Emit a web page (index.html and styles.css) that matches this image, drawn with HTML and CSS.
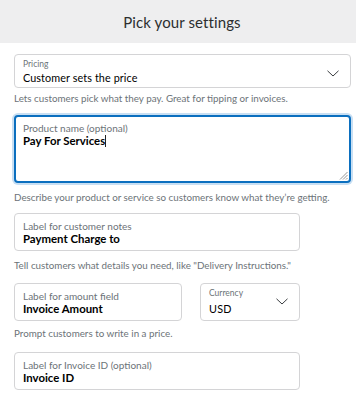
FILE: index.html
```html
<!DOCTYPE html>
<html>
<head>
<meta charset="utf-8">
<link rel="stylesheet" href="styles.css">
</head>
<body>
<header class="top"><h1 class="title">Pick your settings</h1></header>
<main class="form">
  <div class="box select pricing">
    <div class="box-text">
      <span class="lbl small">Pricing</span>
      <span class="val">Customer sets the price</span>
    </div>
    <svg class="chev" width="12" height="7" viewBox="0 0 12 7"><path d="M0.5 0.8 L6 6 L11.5 0.8" fill="none" stroke="#3a3d40" stroke-width="1"/></svg>
  </div>
  <p class="help g1">Lets customers pick what they pay. Great for tipping or invoices.</p>

  <div class="box area">
    <div class="box-text">
      <span class="lbl">Product name (optional)</span>
      <span class="val">Pay For Services<span class="caret"></span></span>
    </div>
    <svg class="grip" width="9" height="9" viewBox="0 0 9 9"><path d="M8.5 1 L1 8.5 M8.5 4 L4 8.5 M8.5 7 L7 8.5" stroke="#888" stroke-width="0.9"/></svg>
  </div>
  <p class="help g2">Describe your product or service so customers know what they’re getting.</p>

  <div class="box input w286">
    <div class="box-text">
      <span class="lbl">Label for customer notes</span>
      <span class="val">Payment Charge to</span>
    </div>
  </div>
  <p class="help g3">Tell customers what details you need, like "Delivery Instructions."</p>

  <div class="row">
    <div class="box input amount">
      <div class="box-text">
        <span class="lbl">Label for amount field</span>
        <span class="val">Invoice Amount</span>
      </div>
    </div>
    <div class="box select currency">
      <div class="box-text">
        <span class="lbl small">Currency</span>
        <span class="val">USD</span>
      </div>
      <svg class="chev" width="12" height="7" viewBox="0 0 12 7"><path d="M0.5 0.8 L6 6 L11.5 0.8" fill="none" stroke="#3a3d40" stroke-width="1"/></svg>
    </div>
  </div>
  <p class="help g4">Prompt customers to write in a price.</p>

  <div class="box input w286">
    <div class="box-text">
      <span class="lbl">Label for Invoice ID (optional)</span>
      <span class="val">Invoice ID</span>
    </div>
  </div>
  <p class="help g5">Give customers a unique ID with each order so they can track it.</p>
</main>
</body>
</html>
```
FILE: styles.css
```css
* { box-sizing: border-box; }
html, body { margin: 0; padding: 0; background: #fff; }
body { font-family: Lato, "Open Sans", sans-serif; color: #2c2e2f; width: 356px; height: 400px; overflow: hidden; }
.top { height: 43px; background: #eeeeef; display: flex; align-items: center; justify-content: center; padding-left: 8px; }
.title { margin: 0; font-size: 15px; font-weight: 400; color: #2c2e2f; letter-spacing: 0.1px; }
.form { padding: 11px 5px 0 14px; display: flex; flex-direction: column; }
.box { border: 1px solid #d4d4d6; border-radius: 4px; display: flex; align-items: flex-start; padding: 0 0 0 8px; position: relative; background: #fff; }
.box-text { display: flex; flex-direction: column; flex: 1; }
.lbl { font-size: 10px; line-height: 12px; color: #6c7378; }
.lbl.small { font-size: 8.5px; line-height: 11px; }
.val { font-size: 11.4px; line-height: 14px; font-weight: 700; color: #000; }
.pricing { height: 34px; padding-top: 4px; align-items: center; }
.pricing .box-text { align-self: flex-start; }
.pricing .val { font-size: 10.8px; font-weight: 400; color: #000; line-height: 15px; letter-spacing: 0.1px; }
.chev { margin-right: 11px; }
.help { margin: 0; font-size: 9.8px; line-height: 14px; color: #6c7378; }
.g1 { margin-top: 3px; margin-bottom: 10px; }
.g2 { margin-top: 7px; margin-bottom: 9px; }
.g3 { margin-top: 7px; margin-bottom: 11px; }
.g4 { margin-top: 5px; margin-bottom: 12px; }
.g5 { margin-top: 6px; }
.area { height: 68px; border: 2px solid #0b6fbf; border-radius: 4px; box-shadow: 0 0 0 2px #c8dff3; padding: 5px 0 0 7px; }
.area .val { line-height: 14px; }
.caret { display: inline-block; width: 1px; height: 12px; background: #222; vertical-align: -2px; }
.grip { position: absolute; right: 1px; bottom: 1px; }
.input { height: 38px; padding-top: 6px; }
.w286 { width: 286px; }
.row { display: flex; gap: 18px; }
.amount { width: 168px; }
.currency { width: 100px; height: 38px; padding-top: 4px; align-items: center; }
.currency .box-text { align-self: flex-start; }
.currency .val { font-size: 10.8px; font-weight: 400; line-height: 16px; margin-top: 2px; letter-spacing: 0.2px; }
.currency .chev { margin-right: 11px; margin-top: -5px; }
```
